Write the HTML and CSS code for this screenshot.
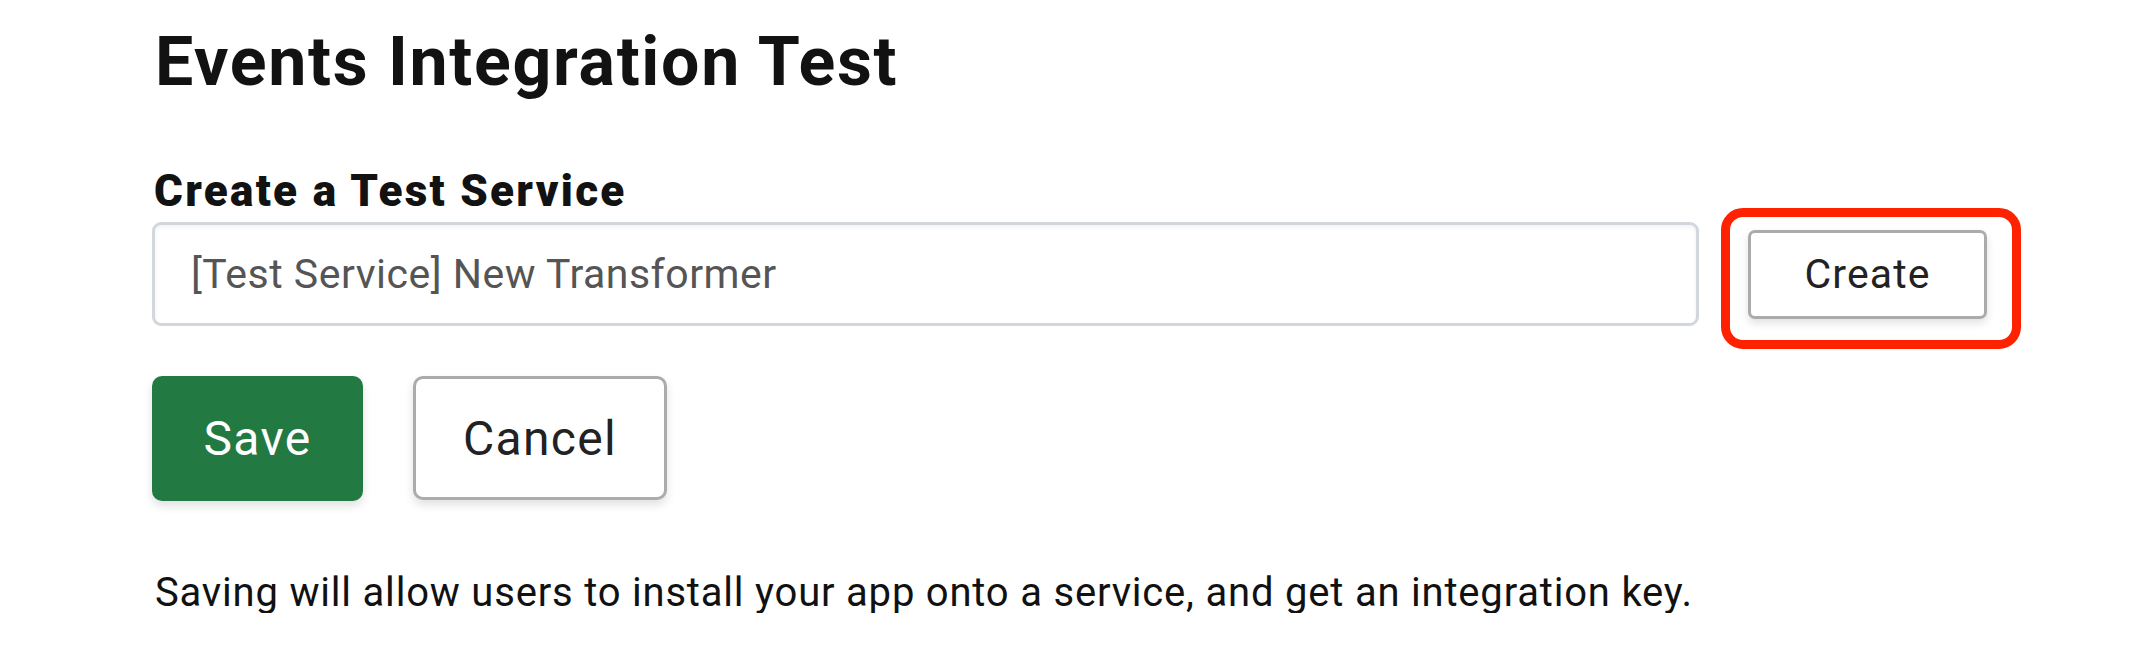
FILE: index.html
```html
<!DOCTYPE html>
<html lang="en">
<head>
<meta charset="utf-8">
<title>Events Integration Test</title>
<link rel="stylesheet" href="styles.css">
</head>
<body>
<main class="page">
  <h1 class="title">Events Integration Test</h1>
  <section class="field">
    <label class="field-label" for="svc">Create a Test Service</label>
    <div class="field-row">
      <input class="text-input" id="svc" type="text" placeholder="[Test Service] New Transformer">
      <div class="create-wrap">
        <button class="btn btn-create" type="button">Create</button>
        <span class="highlight" aria-hidden="true"></span>
      </div>
    </div>
  </section>
  <div class="actions">
    <button class="btn btn-save" type="button">Save</button>
    <button class="btn btn-cancel" type="button">Cancel</button>
  </div>
  <p class="note">Saving will allow users to install your app onto a service, and get an integration key.</p>
</main>
</body>
</html>
```

FILE: styles.css
```css
html, body {
  margin: 0;
  padding: 0;
  background: #ffffff;
}

body {
  font-family: Roboto, "Liberation Sans", sans-serif;
  color: #111111;
}

.page {
  padding: 28px 0 0 152px;
}

.title {
  margin: 0;
  font-size: 68px;
  line-height: 1;
  font-weight: 700;
  letter-spacing: 1.7px;
  color: #121212;
  padding-left: 3px;
}

.field {
  margin-top: 73px;
}

.field-label {
  display: block;
  font-size: 44px;
  line-height: 1;
  font-weight: 900;
  letter-spacing: 2.3px;
  color: #121212;
  padding-left: 2px;
}

.field-row {
  display: flex;
  align-items: center;
  margin-top: 9px;
}

.text-input {
  box-sizing: border-box;
  width: 1547px;
  height: 104px;
  border: 3px solid #d2d7de;
  border-radius: 9px;
  padding: 0 0 0 36px;
  font-family: inherit;
  font-size: 41px;
  letter-spacing: 0.5px;
  color: #555555;
  background: #ffffff;
  box-shadow: inset 0 2px 4px rgba(0, 0, 0, 0.06);
  outline: none;
}

.text-input::placeholder {
  color: #555555;
  opacity: 1;
}

.create-wrap {
  position: relative;
  margin-left: 49px;
}

.btn {
  box-sizing: border-box;
  font-family: inherit;
  cursor: pointer;
  display: flex;
  align-items: center;
  justify-content: center;
}

.btn-create {
  width: 239px;
  height: 89px;
  border: 3px solid #ababab;
  border-radius: 7px;
  background: #ffffff;
  color: #222222;
  font-size: 41px;
  letter-spacing: 1.1px;
  box-shadow: 0 4px 8px rgba(0, 0, 0, 0.12);
}

.highlight {
  position: absolute;
  left: -27px;
  top: -22px;
  right: -34px;
  bottom: -30px;
  border: 9px solid #ff2200;
  border-radius: 22px;
  pointer-events: none;
}

.actions {
  display: flex;
  gap: 50px;
  margin-top: 50px;
}

.btn-save {
  width: 211px;
  height: 125px;
  border: none;
  border-radius: 10px;
  background: #227942;
  color: #ffffff;
  font-size: 48px;
  letter-spacing: 1.3px;
  box-shadow: 0 5px 10px rgba(0, 0, 0, 0.12);
}

.btn-cancel {
  width: 254px;
  height: 124px;
  border: 3px solid #ababab;
  border-radius: 10px;
  background: #ffffff;
  color: #222222;
  font-size: 48px;
  letter-spacing: 1.3px;
  box-shadow: 0 5px 10px rgba(0, 0, 0, 0.12);
}

.note {
  margin: 72px 0 0 3px;
  font-size: 40px;
  line-height: 1;
  letter-spacing: 0.8px;
  color: #111111;
}
```
